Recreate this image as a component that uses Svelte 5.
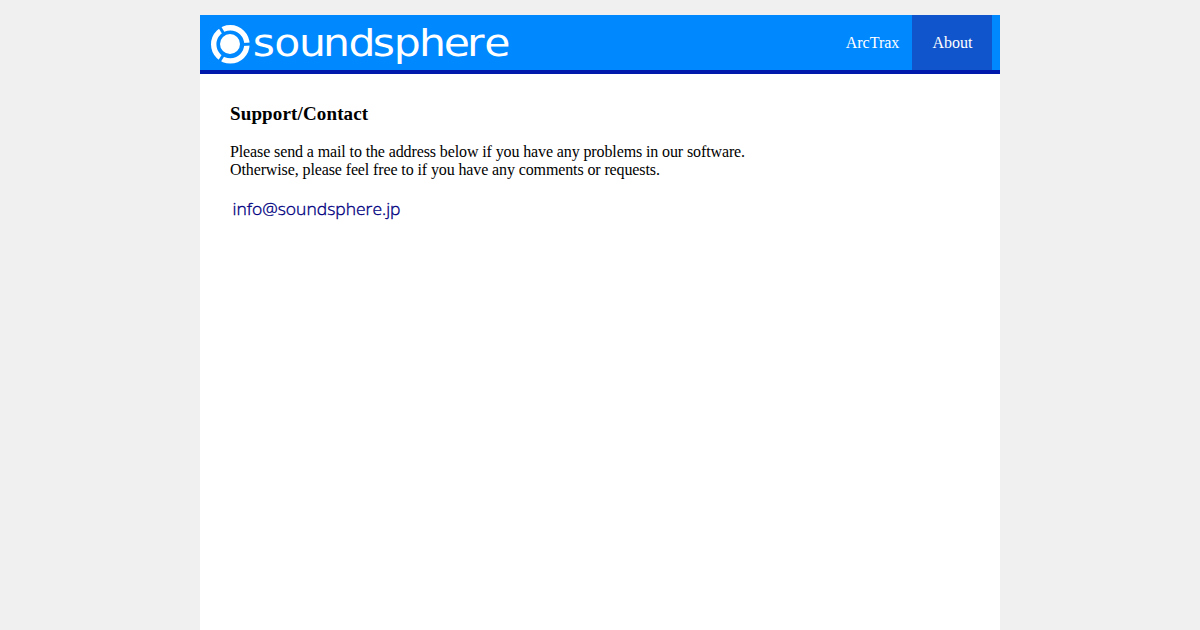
<script lang="ts">
  const links = [
    { label: 'ArcTrax', href: '#arctrax', active: false },
    { label: 'About', href: '#about', active: true },
  ];
</script>

<div class="container">
  <header>
    <a class="logo" href="#top" aria-label="soundsphere">
      <svg width="320" height="55" viewBox="0 0 320 55">
        <circle cx="30" cy="29" r="10" fill="#fff" />
        <circle cx="30.300" cy="29.300" r="16.600" fill="none" stroke="#fff" stroke-width="5.400" />
        <g class="gaps">
          <path d="M42 29.500L52 29" />
          <path d="M24.500 20L18.500 10" />
          <path d="M24 39L18 48.500" />
        </g>
        <text
          transform="scale(1.12 1)"
          x="47 66.3 88.4 109.9 132.6 154.2 173.1 195.6 217.6 238.5 253.8"
          y="40.700">soundsphere</text>
      </svg>
    </a>
    <nav>
      {#each links as link}
        <a href={link.href} class:active={link.active}>{link.label}</a>
      {/each}
    </nav>
  </header>

  <main>
    <h3>Support/Contact</h3>
    <p>
      Please send a mail to the address below if you have any problems in our software.<br>
      Otherwise, please feel free to if you have any comments or requests.
    </p>
    <svg class="mail" width="180" height="30" viewBox="0 0 180 30">
      <text x="2.500" y="20" textLength="168" lengthAdjust="spacingAndGlyphs">info@soundsphere.jp</text>
    </svg>
  </main>
</div>

<style>
  :global(body) {
    margin: 0;
    background-color: #f0f0f0;
    font-family: "Liberation Serif", "Times New Roman", serif;
    overflow: hidden;
  }

  .container {
    width: 800px;
    min-height: 615px;
    margin: 15px auto 0;
    background-color: #fff;
  }

  header {
    display: flex;
    justify-content: space-between;
    height: 55px;
    padding-right: 8px;
    background-color: #0088ff;
    border-bottom: 4px solid #0019ad;
  }

  .logo svg {
    display: block;
  }

  .logo text {
    font-family: "DejaVu Sans", sans-serif;
    font-size: 38px;
    fill: #fff;
  }

  .gaps path {
    stroke: #0088ff;
    stroke-width: 3;
  }

  nav {
    display: flex;
  }

  nav a {
    box-sizing: border-box;
    width: 80px;
    padding-left: 1px;
    line-height: 55px;
    text-align: center;
    font-size: 16px;
    color: #fff;
    text-decoration: none;
  }

  nav a.active {
    background-color: #1155cc;
  }

  main {
    padding: 29px 30px 0;
  }

  h3 {
    margin: 0 0 19px;
    font-size: 19px;
    line-height: 21px;
    letter-spacing: 0.140px;
  }

  p {
    margin: 0;
    font-size: 16px;
    line-height: 18px;
    letter-spacing: -0.115px;
  }

  .mail {
    display: block;
    margin-top: 16px;
  }

  .mail text {
    font-family: "Open Sans", sans-serif;
    font-size: 17px;
    font-weight: 300;
    fill: #000080;
    stroke: #000080;
    stroke-width: 0.35;
  }
</style>
